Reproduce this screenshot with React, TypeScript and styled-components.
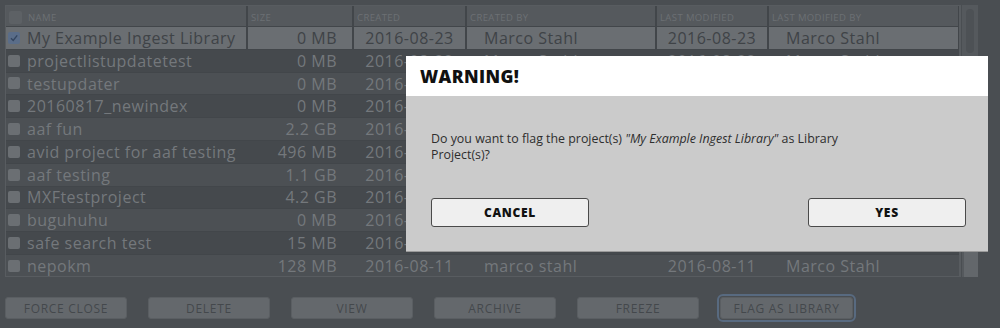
import React from "react";
import styled, { createGlobalStyle } from "styled-components";

const Global = createGlobalStyle`
  html, body { margin: 0; padding: 0; }
  body {
    width: 1000px; height: 328px; overflow: hidden;
    background: #4a4e52;
    font-family: "Open Sans", "Liberation Sans", sans-serif;
  }
`;

const Page = styled.div`
  position: relative;
  width: 1000px;
  height: 328px;
  padding: 5px 0 0 5px;
  box-sizing: border-box;
  display: flex;
  flex-direction: column;
`;

const TableArea = styled.div`
  display: flex;
  height: 272px;
`;

const Table = styled.div`
  width: 956px;
  box-sizing: border-box;
  border: 1px solid #585c60;
  border-right-width: 2px;
  background: #42464a;
  display: flex;
  flex-direction: column;
  gap: 1px;
  overflow: hidden;
`;

const COLS = "240px 104px 111px 188px 110px 189px";

const HeaderRow = styled.div`
  display: grid;
  grid-template-columns: ${COLS};
  column-gap: 2px;
  height: 20px;
  flex: none;
`;

const HeadCell = styled.div`
  background: #55595d;
  color: #6c7074;
  font-size: 9.5px;
  letter-spacing: 0.4px;
  text-transform: uppercase;
  display: flex;
  align-items: center;
  gap: 6px;
  padding: 2px 0 0 3px;
  box-sizing: border-box;
  white-space: nowrap;
`;

const Row = styled.div<{ $tone: "sel" | "light" | "dark" }>`
  display: grid;
  grid-template-columns: ${COLS};
  column-gap: 2px;
  height: 21.8px;
  flex: none;
  background: ${(p) => (p.$tone === "sel" ? "#42464a" : p.$tone === "light" ? "#4c5054" : "#45494d")};
  color: ${(p) => (p.$tone === "sel" ? "#3f4347" : "#74787c")};
  font-size: 16px;
  letter-spacing: 0.5px;
`;

const Cell = styled.div<{ $align?: "left" | "right" | "center"; $pad?: string; $sel?: boolean; $tone?: string }>`
  background: ${(p) => (p.$sel ? "#6a6e72" : p.$tone === "light" ? "#4c5054" : "#45494d")};
  display: flex;
  align-items: center;
  justify-content: ${(p) => (p.$align === "right" ? "flex-end" : p.$align === "center" ? "center" : "flex-start")};
  padding: ${(p) => p.$pad || "0"};
  box-sizing: border-box;
  white-space: nowrap;
  overflow: hidden;
  gap: 7px;
`;

const Check = styled.span<{ $on?: boolean; $head?: boolean }>`
  width: ${(p) => (p.$head ? 13 : 12)}px;
  height: ${(p) => (p.$head ? 13 : 12)}px;
  border-radius: 2px;
  flex: none;
  background: ${(p) => (p.$on ? "#5a6d89" : p.$head ? "#5d6165" : "#6b6f73")};
  display: flex;
  align-items: center;
  justify-content: center;
`;

const Scrollbar = styled.div`
  width: 16px;
  margin-left: 1px;
  display: flex;
  flex-direction: column;
  background: #55595d;
`;

const Thumb = styled.div`
  margin: 4px 4px 0 4px;
  height: 44px;
  border-radius: 4px;
  background: #4d5155;
`;

const Spacer = styled.div`
  flex: 1;
`;

const TrackEnd = styled.div`
  height: 25px;
  margin-left: 2px;
  background: #63676b;
`;

const ButtonBar = styled.div`
  display: flex;
  gap: 21px;
  margin-top: 20px;
`;

const BarButton = styled.div<{ $w?: number; $focus?: boolean }>`
  width: ${(p) => p.$w || 122}px;
  height: 22px;
  box-sizing: border-box;
  background: #64686c;
  border: 1px solid #5a5e62;
  border-radius: 3px;
  color: #44484c;
  font-size: 12px;
  letter-spacing: 0.7px;
  text-transform: uppercase;
  display: flex;
  align-items: center;
  justify-content: center;
  ${(p) => (p.$focus ? "outline: 2px solid #586a80; outline-offset: 1px;" : "")}
`;

const Modal = styled.div`
  position: absolute;
  left: 406px;
  top: 56px;
  width: 582px;
  height: 195px;
  background: #cbcbcb;
  display: flex;
  flex-direction: column;
  box-shadow: 0 1px 0 #9a9a9a;
`;

const ModalHead = styled.div`
  height: 40px;
  background: #ffffff;
  display: flex;
  align-items: center;
  padding-left: 14px;
  font-size: 17.5px;
  font-weight: 800;
  letter-spacing: 0.4px;
  color: #111;
`;

const ModalBody = styled.div`
  flex: 1;
  display: flex;
  flex-direction: column;
  padding: 35px 22px 0 25px;
`;

const Message = styled.p`
  margin: 0;
  width: 430px;
  font-size: 12.4px;
  line-height: 16px;
  color: #2e2e2e;
  em { font-style: italic; }
`;

const Actions = styled.div`
  display: flex;
  justify-content: space-between;
  margin-top: 35px;
`;

const DialogButton = styled.div`
  width: 158px;
  height: 29px;
  box-sizing: border-box;
  background: #efefef;
  border: 1px solid #4a4a4a;
  border-radius: 3px;
  display: flex;
  align-items: center;
  justify-content: center;
  font-size: 12px;
  font-weight: 800;
  letter-spacing: 0.7px;
  color: #111;
`;

type R = [string, string, string, string, string, string];
const rows: R[] = [
  ["My Example Ingest Library", "0 MB", "2016-08-23", "Marco Stahl", "2016-08-23", "Marco Stahl"],
  ["projectlistupdatetest", "0 MB", "2016-08-22", "Marco Stahl", "2016-08-22", "Marco Stahl"],
  ["testupdater", "0 MB", "2016-08-22", "Marco Stahl", "2016-08-22", "Marco Stahl"],
  ["20160817_newindex", "0 MB", "2016-08-17", "Marco Stahl", "2016-08-17", "Marco Stahl"],
  ["aaf fun", "2.2 GB", "2016-08-16", "Marco Stahl", "2016-08-16", "Marco Stahl"],
  ["avid project for aaf testing", "496 MB", "2016-08-16", "Marco Stahl", "2016-08-16", "Marco Stahl"],
  ["aaf testing", "1.1 GB", "2016-08-15", "Marco Stahl", "2016-08-15", "Marco Stahl"],
  ["MXFtestproject", "4.2 GB", "2016-08-15", "Marco Stahl", "2016-08-15", "Marco Stahl"],
  ["buguhuhu", "0 MB", "2016-08-12", "Marco Stahl", "2016-08-12", "Marco Stahl"],
  ["safe search test", "15 MB", "2016-08-12", "Marco Stahl", "2016-08-12", "Marco Stahl"],
  ["nepokm", "128 MB", "2016-08-11", "marco stahl", "2016-08-11", "Marco Stahl"],
];

const CheckMark = () => (
  <svg width="10" height="10" viewBox="0 0 10 10">
    <path d="M2 5.2 L4.2 7.4 L8.2 2.4" fill="none" stroke="#33455f" strokeWidth="1.4" />
  </svg>
);

export default function App() {
  return (
    <Page>
      <Global />
      <TableArea>
        <Table>
          <HeaderRow>
            <HeadCell>
              <Check $head />
              Name
            </HeadCell>
            <HeadCell>Size</HeadCell>
            <HeadCell>Created</HeadCell>
            <HeadCell>Created By</HeadCell>
            <HeadCell>Last Modified</HeadCell>
            <HeadCell>Last Modified By</HeadCell>
          </HeaderRow>
          {rows.map((r, i) => {
            const sel = i === 0;
            const tone = sel ? "sel" : i % 2 === 0 ? "light" : "dark";
            return (
              <Row key={i} $tone={tone}>
                <Cell $sel={sel} $tone={tone} $pad="0 0 0 2px">
                  <Check $on={sel}>{sel && <CheckMark />}</Check>
                  {r[0]}
                </Cell>
                <Cell $sel={sel} $tone={tone} $align="right" $pad="0 15px 0 0">
                  {r[1]}
                </Cell>
                <Cell $sel={sel} $tone={tone} $align="center">
                  {r[2]}
                </Cell>
                <Cell $sel={sel} $tone={tone} $pad="0 0 0 17px">
                  {r[3]}
                </Cell>
                <Cell $sel={sel} $tone={tone} $align="center">
                  {r[4]}
                </Cell>
                <Cell $sel={sel} $tone={tone} $pad="0 0 0 17px">
                  {r[5]}
                </Cell>
              </Row>
            );
          })}
        </Table>
        <Scrollbar>
          <Thumb />
          <Spacer />
          <TrackEnd />
        </Scrollbar>
      </TableArea>
      <ButtonBar>
        <BarButton>Force Close</BarButton>
        <BarButton>Delete</BarButton>
        <BarButton>View</BarButton>
        <BarButton>Archive</BarButton>
        <BarButton>Freeze</BarButton>
        <BarButton $w={133} $focus>
          Flag as Library
        </BarButton>
      </ButtonBar>
      <Modal>
        <ModalHead>WARNING!</ModalHead>
        <ModalBody>
          <Message>
            Do you want to flag the project(s) <em>"My Example Ingest Library"</em> as Library Project(s)?
          </Message>
          <Actions>
            <DialogButton>CANCEL</DialogButton>
            <DialogButton>YES</DialogButton>
          </Actions>
        </ModalBody>
      </Modal>
    </Page>
  );
}
